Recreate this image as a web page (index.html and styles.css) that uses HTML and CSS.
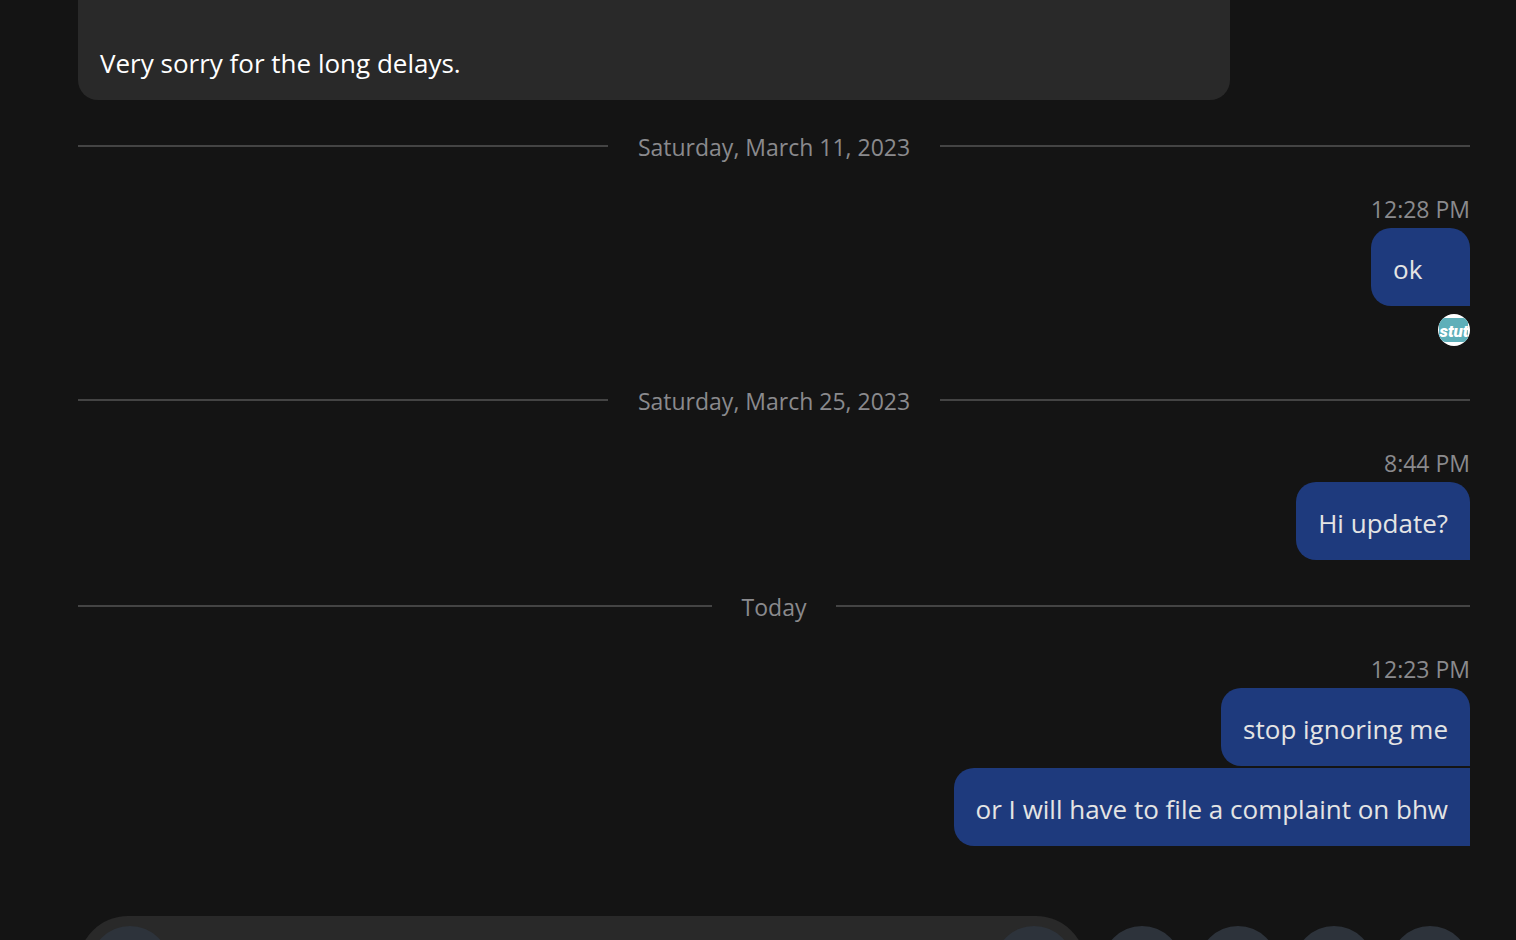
FILE: index.html
```html
<!DOCTYPE html>
<html lang="en">
<head>
  <meta charset="UTF-8">
  <meta name="viewport" content="width=device-width, initial-scale=1.0">
  <title>Chat</title>
  <link rel="stylesheet" href="styles.css">
</head>
<body>
  <main class="chat">
    <section class="messages">
      <div class="bubble received">
        <p>Very sorry for the long delays.</p>
      </div>

      <div class="divider"><span>Saturday, March 11, 2023</span></div>
      <div class="group">
        <time class="time">12:28 PM</time>
        <p class="bubble sent">ok</p>
        <!-- read receipt avatar -->
        <svg class="avatar" viewBox="0 0 32 32" role="img" aria-label="Seen">
          <defs>
            <clipPath id="circle"><circle cx="16" cy="16" r="16"/></clipPath>
          </defs>
          <g clip-path="url(#circle)">
            <rect width="32" height="32" fill="#fff"/>
            <path d="M7 4h18q4 0 5 4v16q-1 4-5 4H8q-4 0-7-5V9q2-5 6-5z" fill="#5eafb9"/>
            <text class="avatar-text" x="16" y="23" text-anchor="middle">stut</text>
          </g>
        </svg>
      </div>

      <div class="divider"><span>Saturday, March 25, 2023</span></div>
      <div class="group">
        <time class="time">8:44 PM</time>
        <p class="bubble sent">Hi update?</p>
      </div>

      <div class="divider"><span>Today</span></div>
      <div class="group">
        <time class="time">12:23 PM</time>
        <p class="bubble sent">stop ignoring me</p>
        <p class="bubble sent next">or I will have to file a complaint on bhw</p>
      </div>
    </section>

    <form class="composer">
      <div class="composer-box">
        <button type="button" class="round-btn" aria-label="Emoji"></button>
        <input type="text" class="composer-input" aria-label="Message">
        <button type="button" class="round-btn" aria-label="Send"></button>
      </div>
      <button type="button" class="round-btn" aria-label="Image"></button>
      <button type="button" class="round-btn" aria-label="File"></button>
      <button type="button" class="round-btn" aria-label="Voice message"></button>
      <button type="button" class="round-btn" aria-label="More"></button>
    </form>
  </main>
</body>
</html>
```

FILE: styles.css
```css
* {
  box-sizing: border-box;
}

body {
  margin: 0;
  background-color: #141414;
  color: #8a8a8d;
  font-family: "Segoe UI", "Open Sans", "Noto Sans", sans-serif;
  font-size: 23px;
  line-height: 32px;
}

p {
  margin: 0;
}

.chat {
  height: 100vh;
  overflow: hidden;
  padding: 0 46px 0 78px;
}

.messages {
  display: flex;
  flex-direction: column;
}

.bubble {
  padding: 21px 22px 17px;
  border-radius: 20px;
  font-size: 26px;
  line-height: 40px;
}

.received {
  width: 1152px;
  max-width: 100%;
  padding-top: 43px;
  border-radius: 0 0 20px 20px;
  background-color: #292929;
  color: #fff;
}

.sent {
  min-width: 99px;
  border-bottom-right-radius: 0;
  background-color: #1e3a7d;
  color: #e4e4e4;
}

.next {
  margin-top: 2px;
  border-top-right-radius: 0;
}

.group {
  display: flex;
  flex-direction: column;
  align-items: flex-end;
}

.time {
  margin-bottom: 3px;
}

.avatar {
  width: 32px;
  height: 32px;
  margin: 8px 0;
}

.avatar-text {
  fill: #fff;
  font: italic 900 17px Roboto, sans-serif;
}

.divider {
  display: flex;
  align-items: center;
  gap: 30px;
  margin: 30px 0 31px;
}

.divider span {
  padding-top: 2px;
  line-height: 30px;
}

.divider::before,
.divider::after {
  content: "";
  flex: 1;
  height: 2px;
  background-color: #444;
}

.composer {
  display: flex;
  align-items: center;
  gap: 16px;
  margin-top: 70px;
}

.composer-box {
  flex: 1;
  display: flex;
  align-items: center;
  min-width: 0;
  padding: 10px 12px;
  border-radius: 50px;
  background-color: #292929;
}

.composer-input {
  flex: 1;
  min-width: 0;
  padding: 0 16px;
  border: none;
  outline: none;
  background: none;
  color: #e4e4e4;
  font: inherit;
}

.round-btn {
  flex: none;
  width: 80px;
  height: 80px;
  padding: 0;
  border: none;
  border-radius: 50%;
  background-color: #2d333b;
  cursor: pointer;
}
```
